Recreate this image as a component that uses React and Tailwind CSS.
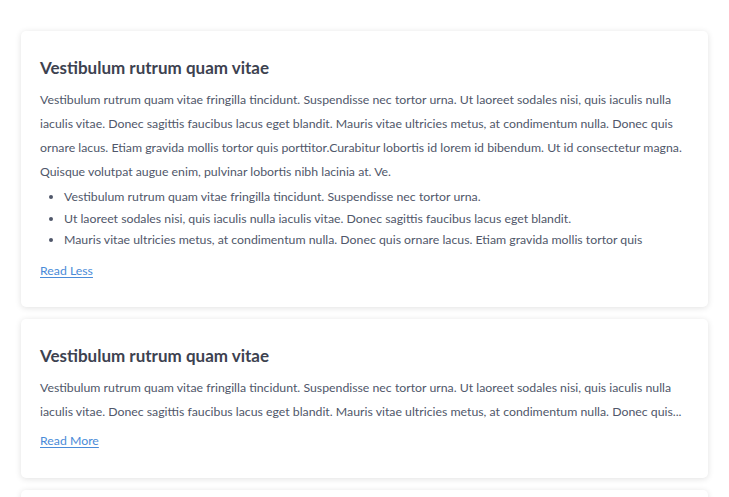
import React from "react";

const P1 =
  "Vestibulum rutrum quam vitae fringilla tincidunt. Suspendisse nec tortor urna. Ut laoreet sodales nisi, quis iaculis nulla iaculis vitae. Donec sagittis faucibus lacus eget blandit. Mauris vitae ultricies metus, at condimentum nulla. Donec quis ornare lacus. Etiam gravida mollis tortor quis porttitor.Curabitur lobortis id lorem id bibendum. Ut id consectetur magna. Quisque volutpat augue enim, pulvinar lobortis nibh lacinia at. Ve.";

const P2 =
  "Vestibulum rutrum quam vitae fringilla tincidunt. Suspendisse nec tortor urna. Ut laoreet sodales nisi, quis iaculis nulla iaculis vitae. Donec sagittis faucibus lacus eget blandit. Mauris vitae ultricies metus, at condimentum nulla. Donec quis...";

function Card({ children }) {
  return (
    <div className="bg-white rounded-[5px] shadow-[0_1px_6px_rgba(0,0,0,0.12)] px-[19px] pt-[25px]">
      {children}
    </div>
  );
}

export default function App() {
  return (
    <div
      className="bg-white h-[497px] overflow-hidden px-[21px] pt-[31px] flex flex-col gap-[12px]"
      style={{ fontFamily: "Lato, 'Noto Sans', sans-serif" }}
    >
      <Card>
        <h2 className="text-[17px] leading-[24px] font-bold text-[#3d4250]">
          Vestibulum rutrum quam vitae
        </h2>
        <p className="mt-[8px] text-[12.3px] leading-[24px] text-[#50576a]">{P1}</p>
        <ul className="mt-[2px] pl-[24px] list-disc text-[12.3px] leading-[21.5px] text-[#50576a]">
          <li>Vestibulum rutrum quam vitae fringilla tincidunt. Suspendisse nec tortor urna.</li>
          <li>Ut laoreet sodales nisi, quis iaculis nulla iaculis vitae. Donec sagittis faucibus lacus eget blandit.</li>
          <li>Mauris vitae ultricies metus, at condimentum nulla. Donec quis ornare lacus. Etiam gravida mollis tortor quis</li>
        </ul>
        <a href="#" className="block mt-[10px] mb-[26px] w-fit text-[12.3px] leading-[20px] text-[#4a8bd8] underline underline-offset-2">
          Read Less
        </a>
      </Card>
      <Card>
        <h2 className="text-[17px] leading-[24px] font-bold text-[#3d4250]">
          Vestibulum rutrum quam vitae
        </h2>
        <p className="mt-[8px] text-[12.3px] leading-[24px] text-[#50576a]">{P2}</p>
        <a href="#" className="block mt-[7px] mb-[27px] w-fit text-[12.3px] leading-[20px] text-[#4a8bd8] underline underline-offset-2">
          Read More
        </a>
      </Card>
      <Card>
        <div className="h-[40px]" />
      </Card>
    </div>
  );
}
